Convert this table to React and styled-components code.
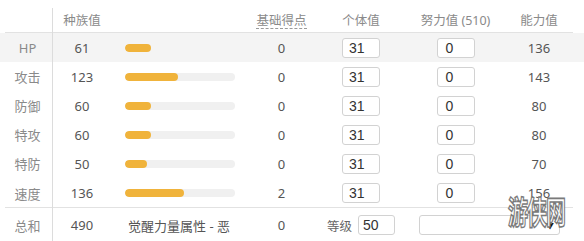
import React from "react";
import styled, { createGlobalStyle } from "styled-components";

const Global = createGlobalStyle`
  html, body { margin: 0; padding: 0; background: #fff; }
  body { font-family: "Noto Sans", "Noto Sans CJK SC", sans-serif; }
`;

const COLS = "53px 58px 136px 69px 90px 99px 68px";

const Wrap = styled.div`
  position: relative;
  width: 584px;
  height: 241px;
  padding-top: 8px;
  box-sizing: border-box;
  overflow: hidden;
`;

const Row = styled.div`
  display: grid;
  grid-template-columns: ${COLS};
  height: ${(p) => p.$h || 29}px;
  align-items: center;
  background-color: ${(p) => (p.$shade ? "#f4f4f4" : "transparent")};
  background-image: ${(p) =>
    p.$line ? "linear-gradient(#e2e2e2, #e2e2e2)" : "none"};
  background-repeat: no-repeat;
  background-size: 568px 1px;
  background-position: 5px 100%;
  box-sizing: border-box;
  font-size: 13px;
  color: #555;
`;

const Cell = styled.div`
  height: 100%;
  display: flex;
  align-items: center;
  justify-content: ${(p) => p.$justify || "center"};
  box-sizing: border-box;
  grid-column: ${(p) => p.$span || "auto"};
  white-space: nowrap;
`;

const LabelCell = styled(Cell)`
  border-right: 1px solid #dcdcdc;
  color: #8a8a8a;
  padding-left: 3px;
`;

const HeadText = styled.span`
  color: #8a8a8a;
  font-size: 12.5px;
  border-bottom: ${(p) => (p.$dashed ? "1px dashed #9a9a9a" : "none")};
  line-height: 15px;
`;

const Track = styled.div`
  width: 110px;
  height: 8px;
  border-radius: 4px;
  background: ${(p) => (p.$shade ? "#f4f4f4" : "#f0f0f0")};
  margin-left: 14px;
  overflow: hidden;
`;

const Fill = styled.div`
  height: 100%;
  border-radius: 4px;
  background: #f0b33b;
`;

const NumInput = styled.div`
  width: ${(p) => p.$w || 38}px;
  height: 20px;
  box-sizing: border-box;
  border: 1px solid #d2d2d2;
  border-radius: 3px;
  background: #fff;
  display: flex;
  align-items: center;
  padding-left: ${(p) => p.$pl || 6}px;
  font-family: "Liberation Sans", Arial, sans-serif;
  font-size: 14px;
  color: #333;
`;

const Level = styled.span`
  color: #666;
  font-size: 12.5px;
  margin-right: 6px;
`;

const Select = styled.div`
  width: 141px;
  height: 20px;
  margin-left: 13px;
  box-sizing: border-box;
  border: 1px solid #d2d2d2;
  border-radius: 3px;
  background: #fff;
  display: flex;
  align-items: center;
  justify-content: flex-end;
  padding-right: 5px;
  font-size: 8px;
  color: #111;
`;

const Watermark = styled.div`
  position: absolute;
  left: 508px;
  top: 194px;
  font-family: "Noto Sans CJK SC", sans-serif;
  font-size: 20px;
  line-height: 22px;
  font-weight: 700;
  letter-spacing: -1px;
  color: #fff;
  -webkit-text-stroke: 1px #7a7a7a;
  transform: scaleY(1.6);
  transform-origin: top left;
  pointer-events: none;
`;

const stats = [
  { label: "HP", base: 61, ev: 0, val: 136 },
  { label: "攻击", base: 123, ev: 0, val: 143 },
  { label: "防御", base: 60, ev: 0, val: 80 },
  { label: "特攻", base: 60, ev: 0, val: 80 },
  { label: "特防", base: 50, ev: 0, val: 70 },
  { label: "速度", base: 136, ev: 2, val: 156 },
];

export default function App() {
  return (
    <>
      <Global />
      <Wrap>
        <Row $h={25} $line>
          <LabelCell />
          <Cell><HeadText>种族值</HeadText></Cell>
          <Cell />
          <Cell><HeadText $dashed>基础得点</HeadText></Cell>
          <Cell><HeadText>个体值</HeadText></Cell>
          <Cell><HeadText>努力值 (510)</HeadText></Cell>
          <Cell><HeadText>能力值</HeadText></Cell>
        </Row>
        {stats.map((s, i) => (
          <Row
            key={s.label}
            $shade={i === 0}
            $line={i === stats.length - 1}
            $h={i === stats.length - 1 ? 30 : 29}
          >
            <LabelCell>{s.label}</LabelCell>
            <Cell>{s.base}</Cell>
            <Cell $justify="flex-start">
              <Track $shade={i === 0}>
                <Fill style={{ width: `${(s.base / 255) * 100}%` }} />
              </Track>
            </Cell>
            <Cell>{s.ev}</Cell>
            <Cell><NumInput>31</NumInput></Cell>
            <Cell><NumInput $pl={8}>0</NumInput></Cell>
            <Cell>{s.val}</Cell>
          </Row>
        ))}
        <Row $h={34}>
          <LabelCell>总和</LabelCell>
          <Cell>490</Cell>
          <Cell>觉醒力量属性 - 恶</Cell>
          <Cell>0</Cell>
          <Cell>
            <Level>等级</Level>
            <NumInput $w={37} $pl={4}>50</NumInput>
          </Cell>
          <Cell $span="span 2" $justify="flex-start">
            <Select>▼</Select>
          </Cell>
        </Row>
        <Watermark>游侠网</Watermark>
      </Wrap>
    </>
  );
}
